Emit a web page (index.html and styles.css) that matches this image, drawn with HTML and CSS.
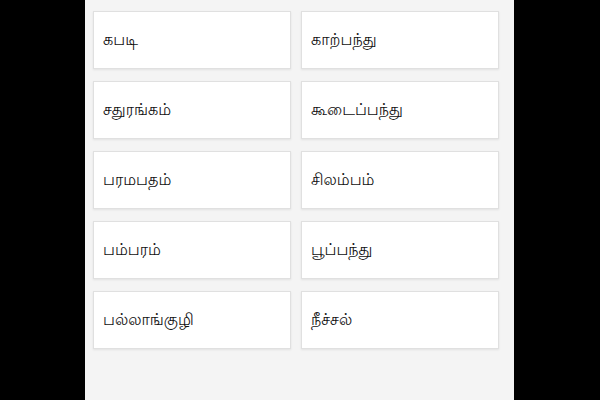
FILE: index.html
```html
<!DOCTYPE html>
<html>
<head>
<meta charset="utf-8">
<link rel="stylesheet" href="styles.css">
</head>
<body>
<div class="page">
  <div class="grid">
    <div class="card">கபடி</div>
    <div class="card">காற்பந்து</div>
    <div class="card">சதுரங்கம்</div>
    <div class="card">கூடைப்பந்து</div>
    <div class="card">பரமபதம்</div>
    <div class="card">சிலம்பம்</div>
    <div class="card">பம்பரம்</div>
    <div class="card">பூப்பந்து</div>
    <div class="card">பல்லாங்குழி</div>
    <div class="card">நீச்சல்</div>
  </div>
</div>
</body>
</html>
```
FILE: styles.css
```css
html, body {
  margin: 0;
  padding: 0;
  background: #000;
  height: 100%;
}
.page {
  width: 429px;
  margin-left: 85px;
  height: 400px;
  background: #f4f4f4;
  box-sizing: border-box;
  padding: 11px 15px 0 8px;
}
.grid {
  display: grid;
  grid-template-columns: 198px 198px;
  column-gap: 10px;
  row-gap: 12px;
}
.card {
  height: 58px;
  box-sizing: border-box;
  background: #fff;
  border: 1px solid #e0e0e0;
  box-shadow: 0 1px 2px rgba(0,0,0,0.08);
  display: flex;
  align-items: center;
  padding: 1px 0 0 9px;
  font-family: "Lohit Tamil", "Noto Sans Tamil", sans-serif;
  font-size: 16px;
  color: #111;
}
```
